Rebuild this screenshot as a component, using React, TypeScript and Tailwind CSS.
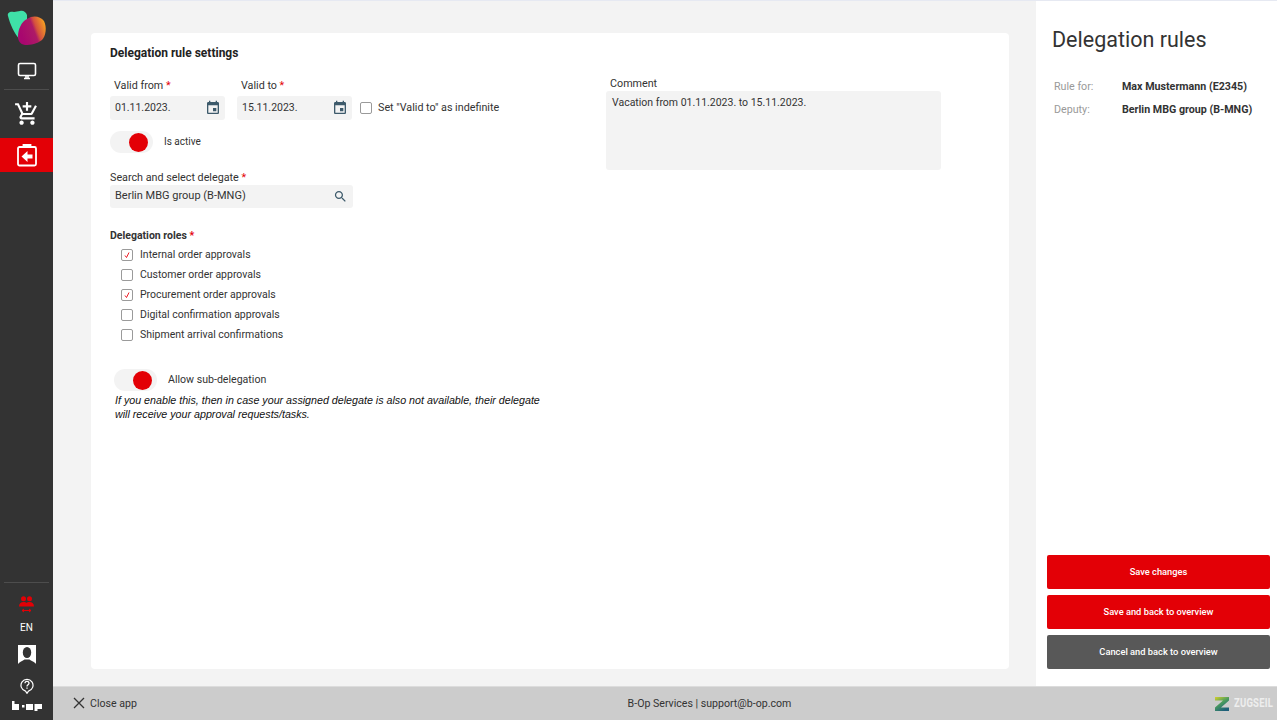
const font = { fontFamily: "Roboto, sans-serif" };

const roles = [
  { label: "Internal order approvals", checked: true },
  { label: "Customer order approvals", checked: false },
  { label: "Procurement order approvals", checked: true },
  { label: "Digital confirmation approvals", checked: false },
  { label: "Shipment arrival confirmations", checked: false },
];

function Star() {
  return <span className="text-[#e30006]"> *</span>;
}

function Box({ checked }: { checked?: boolean }) {
  return (
    <span className="flex h-[12px] w-[12px] shrink-0 items-center justify-center rounded-[2px] border border-[#9a9a9a] bg-white">
      {checked && (
        <svg width="10" height="10" viewBox="0 0 10 10" fill="none" stroke="#ee1c25" strokeWidth="1">
          <path d="M3 5.500L4.500 7.500L7 2.500" />
        </svg>
      )}
    </span>
  );
}

function Toggle() {
  return (
    <span className="flex h-[22px] w-[43px] items-center justify-end rounded-full bg-[#f3f3f3] pr-[5px]">
      <span className="h-[19px] w-[19px] rounded-full bg-[#e30006]" />
    </span>
  );
}

function EventIcon() {
  return (
    <svg width="16" height="16" viewBox="0 0 24 24" fill="#3d5a6b">
      <path d="M17 12h-5v5h5v-5zM16 1v2H8V1H6v2H5c-1.11 0-1.99.9-1.99 2L3 19c0 1.1.89 2 2 2h14c1.1 0 2-.9 2-2V5c0-1.1-.9-2-2-2h-1V1h-2zm3 18H5V8h14v11z" />
    </svg>
  );
}

function DateField({ label, value }: { label: string; value: string }) {
  return (
    <div className="w-[115px]">
      <div className="mb-[2px] pl-[4px] text-[10.75px] leading-[16px] text-[#333]">
        {label}
        <Star />
      </div>
      <div className="flex h-[24px] items-center justify-between rounded-[3px] bg-[#f3f3f3] pl-[5px] pr-[4px] text-[10.5px] text-[#333]">
        <span>{value}</span>
        <EventIcon />
      </div>
    </div>
  );
}

function Sidebar() {
  return (
    <aside className="flex h-full w-[53px] shrink-0 flex-col bg-[#333333]">
      <div className="flex h-[54px] items-start justify-center pt-[10px]">
        <svg width="40" height="36" viewBox="0 0 40 36">
          <defs>
            <linearGradient id="logoGrad" x1="0.1" y1="0.6" x2="1" y2="0.25">
              <stop offset="0" stopColor="#a8076f" />
              <stop offset="0.5" stopColor="#ad1a66" />
              <stop offset="0.62" stopColor="#d4503f" />
              <stop offset="1" stopColor="#f7a520" />
            </linearGradient>
          </defs>
          <path d="M7 2 C3 1 0 3 1 6 C3 14 7 23 13 30 L20 12 L20 5 C19 2 16 0 13 1 Z" fill="#3fe0a8" />
          <path d="M20 9 C26 5 33 6 37 11 C40 17 39 26 35 30 C30 34 24 35 18 35 C13 34 11 31 11 26 C11 20 14 12 20 9 Z" fill="url(#logoGrad)" />
        </svg>
      </div>
      <div className="flex h-[35px] items-center justify-center">
        <svg width="20" height="19" viewBox="0 0 20 19" fill="none" stroke="#fff" strokeWidth="1.6">
          <rect x="1.500" y="1.500" width="17" height="12" rx="1.500" />
          <path d="M7 16.500h6M9 13.500v3M11 13.500v3" />
        </svg>
      </div>
      <div className="mx-[4px] h-px bg-[#4d4d4d]" />
      <div className="flex h-[48px] items-center justify-center">
        <svg width="26" height="26" viewBox="0 0 24 24" fill="#fff">
          <path d="M11 9h2V6h3V4h-3V1h-2v3H8v2h3v3zm-4 9c-1.1 0-1.99.9-1.99 2S5.900 22 7 22s2-.9 2-2-.9-2-2-2zm10 0c-1.100 0-1.990.9-1.990 2s.89 2 1.990 2 2-.9 2-2-.9-2-2-2zm-9.830-3.250l.03-.12.9-1.630h7.450c.75 0 1.410-.41 1.750-1.030l3.860-7.010L19.420 4h-.01l-1.100 2-2.760 5H8.530l-.13-.27L6.160 6l-.95-2-.94-2H1v2h2l3.600 7.590-1.350 2.450c-.16.28-.25.61-.25.96 0 1.100.9 2 2 2h12v-2H7.420c-.13 0-.25-.11-.25-.25z" />
        </svg>
      </div>
      <div className="flex h-[34px] items-center justify-center bg-[#e30006]">
        <svg width="20" height="24" viewBox="0 0 20 24" fill="none" stroke="#fff" strokeWidth="1.8">
          <rect x="1" y="4" width="18" height="18.500" rx="1.500" />
          <path d="M6.500 4V2h7v2" />
          <path d="M15.500 11.500H10.500V8L4.500 13.500l6 5.500v-3.500h5z" fill="#fff" stroke="none" />
        </svg>
      </div>
      <div className="flex-1" />
      <div className="mx-[4px] h-px bg-[#4d4d4d]" />
      <div className="flex flex-col items-center">
        <div className="mt-[13px] flex h-[17px] items-center">
          <svg width="15" height="17" viewBox="0 0 15 17" fill="#e30006">
            <circle cx="4.500" cy="2.800" r="2.500" />
            <circle cx="10.500" cy="2.800" r="2.500" />
            <path d="M0 10.500c0-3 1.800-4.500 4.500-4.500 1.300 0 2.400.4 3 1 .6-.6 1.700-1 3-1 2.700 0 4.500 1.500 4.500 4.500z" />
            <path d="M3 14.500h9M3 14.500l2-1.500M3 14.500l2 1.500M12 14.500l-2-1.500M12 14.500l-2 1.500" stroke="#e30006" strokeWidth="1" fill="none" />
          </svg>
        </div>
        <div className="mt-[9px] text-[10px] leading-[12px] text-white">EN</div>
        <div className="mt-[11px] flex h-[21px] w-[18px] items-end justify-center bg-white">
          <svg width="18" height="20" viewBox="0 0 18 20" fill="#333">
            <ellipse cx="9" cy="6.500" rx="4.200" ry="5.500" />
            <path d="M0 20v-2c1-2 5-3 6.500-4.500h5C13 15 17 16 18 18v2z" />
          </svg>
        </div>
        <div className="mt-[12px] flex h-[16px] items-center">
          <svg width="14" height="16" viewBox="0 0 14 16" fill="none" stroke="#fff" strokeWidth="1.200">
            <path d="M5.500 13.100A6 6 0 1 1 8.500 13.100L7 15.300z" />
            <path d="M5 5.300c0-2.600 4-2.600 4 0 0 1.500-2 1.500-2 3.200" strokeWidth="1.300" />
            <path d="M7 9.600v1.200" strokeWidth="1.300" />
          </svg>
        </div>
        <div className="mt-[7px] flex h-[10px] items-center">
          <svg width="30" height="10" viewBox="0 0 30 10" fill="#fff">
            <path d="M0 0h2.500v3H7v6H0z" />
            <rect x="10" y="4" width="2.500" height="2.500" />
            <path d="M14 3h7v6h-7z" />
            <path d="M22.500 3H30v5h-4.500v2h-3z" />
          </svg>
        </div>
        <div className="h-[9px]" />
      </div>
    </aside>
  );
}

export default function App() {
  return (
    <div style={font} className="flex h-[720px] w-[1277px] overflow-hidden bg-[#f3f3f3]">
      <Sidebar />
      <div className="flex min-w-0 flex-1 flex-col">
        <div className="h-px shrink-0 bg-[#e6e9f2]" />
        <div className="flex min-h-0 flex-1">
          <main className="flex-1 pb-[17px] pl-[38px] pr-[27px] pt-[32px]">
            <section className="flex h-full justify-between rounded-[4px] bg-white pl-[19px] pr-[68px] pt-[13px]">
              <div className="w-[450px]">
                <h2 className="text-[12px] font-bold leading-[14px] text-[#222]">Delegation rule settings</h2>
                <div className="mt-[18px] flex items-end gap-[12px]">
                  <DateField label="Valid from" value="01.11.2023." />
                  <DateField label="Valid to" value="15.11.2023." />
                  <div className="-ml-[4px] flex h-[24px] items-center gap-[6px] text-[10.75px] text-[#333]">
                    <Box />
                    <span>Set "Valid to" as indefinite</span>
                  </div>
                </div>
                <div className="mt-[11px] flex items-center gap-[11px]">
                  <Toggle />
                  <span className="-mt-[2px] text-[10px] text-[#333]">Is active</span>
                </div>
                <div className="mt-[17px] h-[15px] text-[10.75px] leading-[16px] text-[#333]">
                  Search and select delegate
                  <Star />
                </div>
                <div className="flex h-[23px] w-[243px] items-center justify-between rounded-[3px] bg-[#f3f3f3] pl-[5px] pr-[5px] text-[11px] text-[#333]">
                  <span>Berlin MBG group (B-MNG)</span>
                  <svg width="15" height="15" viewBox="0 0 24 24" fill="#3d5a6b">
                    <path d="M15.500 14h-.79l-.28-.27C15.410 12.590 16 11.110 16 9.500 16 5.910 13.090 3 9.500 3S3 5.910 3 9.500 5.910 16 9.500 16c1.610 0 3.090-.59 4.230-1.570l.27.28v.79l5 4.990L20.490 19l-4.990-5zm-6 0C7.010 14 5 11.990 5 9.500S7.010 5 9.500 5 14 7.010 14 9.500 11.990 14 9.500 14z" />
                  </svg>
                </div>
                <div className="mt-[20px] text-[10.5px] font-bold leading-[16px] text-[#333]">
                  Delegation roles
                  <Star />
                </div>
                <ul className="mt-[1px] pl-[11px]">
                  {roles.map((r) => (
                    <li key={r.label} className="flex h-[20px] items-center gap-[7px] text-[10.5px] text-[#333]">
                      <Box checked={r.checked} />
                      {r.label}
                    </li>
                  ))}
                </ul>
                <div className="ml-[4px] mt-[24px] flex items-center gap-[11px]">
                  <Toggle />
                  <span className="text-[10.6px] text-[#333]">Allow sub-delegation</span>
                </div>
                <p className="ml-[5px] mt-[2px] w-[430px] text-[10.7px] italic leading-[14px] text-[#111]" style={{ fontFamily: '"Liberation Sans", sans-serif' }}>
                  If you enable this, then in case your assigned delegate is also not available, their delegate will receive your approval requests/tasks.
                </p>
              </div>
              <div className="mt-[30px] w-[335px]">
                <div className="h-[15px] pl-[4px] text-[10.75px] leading-[16px] text-[#333]">Comment</div>
                <div className="h-[79px] rounded-[3px] bg-[#f3f3f3] px-[6px] py-[5px] text-[10.5px] leading-[14px] text-[#333]">
                  Vacation from 01.11.2023. to 15.11.2023.
                </div>
              </div>
            </section>
          </main>
          <aside className="flex w-[241px] shrink-0 flex-col bg-white pb-[17px] pl-[11px] pr-[7px] pt-[25px]">
            <h1 className="pl-[5px] text-[21.5px] leading-[28px] text-[#333]">Delegation rules</h1>
            <dl className="mt-[22px] pl-[7px] text-[10.7px]">
              <div className="flex h-[22px] items-center">
                <dt className="w-[68px] text-[#999]">Rule for:</dt>
                <dd className="font-bold text-[#333]">Max Mustermann (E2345)</dd>
              </div>
              <div className="mt-px flex h-[22px] items-center">
                <dt className="w-[68px] text-[#999]">Deputy:</dt>
                <dd className="font-bold text-[#333]">Berlin MBG group (B-MNG)</dd>
              </div>
            </dl>
            <div className="mt-auto flex flex-col gap-[6px] text-[9.3px] font-medium text-white">
              <button className="h-[34px] rounded-[2px] bg-[#e30006]">Save changes</button>
              <button className="h-[34px] rounded-[2px] bg-[#e30006]">Save and back to overview</button>
              <button className="h-[34px] rounded-[2px] bg-[#585858]">Cancel and back to overview</button>
            </div>
          </aside>
        </div>
        <footer className="relative flex h-[34px] shrink-0 items-center justify-center border-t border-[#dcdcdc] bg-[#cccccc] pl-[89px] text-[10.6px] text-[#333]">
          <div className="absolute left-[20px] flex items-center gap-[5px]">
            <svg width="12" height="12" viewBox="0 0 12 12" fill="none" stroke="#333" strokeWidth="1.300">
              <path d="M1 1l10 10M11 1L1 11" />
            </svg>
            <span>Close app</span>
          </div>
          <span>B-Op Services | support@b-op.com</span>
          <div className="absolute right-[6px] flex items-center gap-[5px]">
            <svg width="14" height="14" viewBox="0 0 14 14">
              <defs>
                <linearGradient id="zGrad" x1="0" y1="0" x2="0.6" y2="1">
                  <stop offset="0" stopColor="#d6d02a" />
                  <stop offset="0.5" stopColor="#4a9c5e" />
                  <stop offset="1" stopColor="#1e5f7a" />
                </linearGradient>
              </defs>
              <path d="M0 0h14v3.500L6 10.500h8V14H0v-3.500L8 3.500H0z" fill="url(#zGrad)" />
            </svg>
            <span className="w-[37px] scale-y-[1.25] whitespace-nowrap text-[9.5px] font-bold tracking-[0.2px] text-[#eeeeee]">ZUGSEIL</span>
          </div>
        </footer>
      </div>
    </div>
  );
}
